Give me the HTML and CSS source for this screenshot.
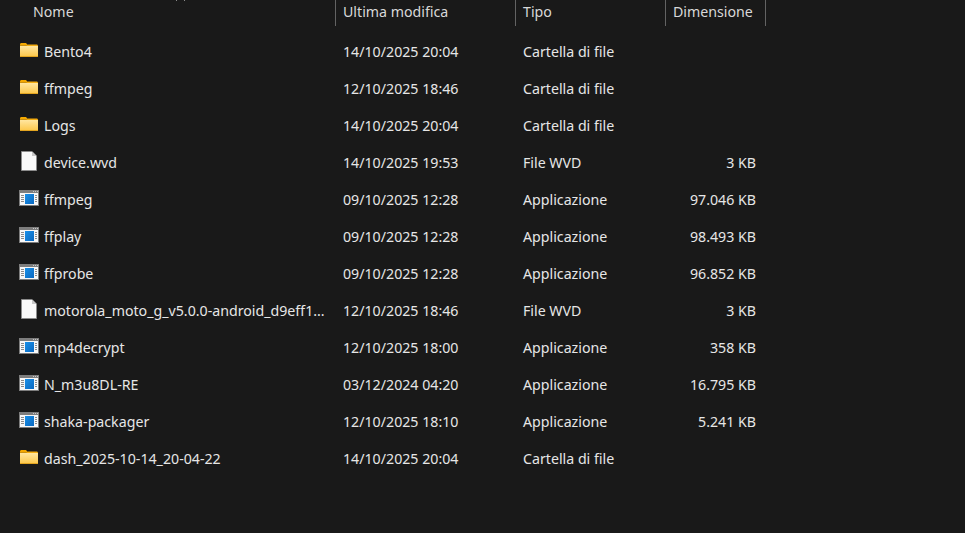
FILE: index.html
```html
<!DOCTYPE html>
<html lang="it">
<head>
<meta charset="utf-8">
<title>Esplora file</title>
<link rel="stylesheet" href="styles.css">
</head>
<body>
<svg class="defs" width="0" height="0" aria-hidden="true">
  <defs>
    <linearGradient id="fg" x1="0" y1="0" x2="0" y2="1"><stop offset="0" stop-color="#ffe6a0"/><stop offset="1" stop-color="#fcc94f"/></linearGradient>
    <linearGradient id="bg" x1="0" y1="0" x2="1" y2="1"><stop offset="0" stop-color="#1a90e8"/><stop offset="1" stop-color="#0a68c0"/></linearGradient>
    <symbol id="folder" viewBox="0 0 18 14">
      <path d="M0 1.5C0 .7.6 0 1.4 0H6l2 2.2h-8z" fill="#f4a800"/>
      <path d="M0 2.2h6.5L8 1.5h8.6c.8 0 1.4.6 1.4 1.4v1H0z" fill="#f4ac10"/>
      <rect x="0" y="3" width="18" height="10" fill="url(#fg)"/>
      <rect x="0" y="13" width="18" height="1" fill="#e2a420"/>
    </symbol>
    <symbol id="file" viewBox="0 0 16 20">
      <path d="M.5.5H11L15.5 5V19.5H.5z" fill="#fafafa" stroke="#8c8c8c"/>
      <path d="M11 .5V5h4.5z" fill="#c8c8c8"/>
    </symbol>
    <symbol id="app" viewBox="0 0 20 16">
      <rect x="0" y="0" width="20" height="16" fill="#7d7d7d"/>
      <rect x="1" y="3" width="18" height="12" fill="#f7f7f7"/>
      <rect x="14" y="1" width="1" height="1" fill="#c8c8c8"/>
      <rect x="16" y="1" width="1" height="1" fill="#c8c8c8"/>
      <rect x="18" y="1" width="1" height="1" fill="#c8c8c8"/>
      <rect x="6" y="4" width="9" height="10" fill="url(#bg)"/>
      <rect x="2" y="5" width="3" height="1" fill="#8a8a8a"/>
      <rect x="2" y="7" width="3" height="1" fill="#8a8a8a"/>
      <rect x="2" y="9" width="3" height="1" fill="#8a8a8a"/>
      <rect x="2" y="11" width="3" height="1" fill="#8a8a8a"/>
      <rect x="16" y="5" width="2" height="1" fill="#8a8a8a"/>
      <rect x="16" y="7" width="2" height="1" fill="#8a8a8a"/>
      <rect x="16" y="9" width="2" height="1" fill="#8a8a8a"/>
      <rect x="16" y="11" width="2" height="1" fill="#8a8a8a"/>
    </symbol>
  </defs>
</svg>
<div class="list">
  <div class="head">
    <div class="hc hname">Nome</div>
    <div class="hc">Ultima modifica</div>
    <div class="hc">Tipo</div>
    <div class="hc">Dimensione</div>
  </div>
  <div class="rows">
    <div class="row"><span class="name"><span class="ic"><svg class="i-folder"><use href="#folder"/></svg></span>Bento4</span><span class="date">14/10/2025 20:04</span><span>Cartella di file</span><span class="size"></span></div>
    <div class="row"><span class="name"><span class="ic"><svg class="i-folder"><use href="#folder"/></svg></span>ffmpeg</span><span class="date">12/10/2025 18:46</span><span>Cartella di file</span><span class="size"></span></div>
    <div class="row"><span class="name"><span class="ic"><svg class="i-folder"><use href="#folder"/></svg></span>Logs</span><span class="date">14/10/2025 20:04</span><span>Cartella di file</span><span class="size"></span></div>
    <div class="row"><span class="name"><span class="ic"><svg class="i-file"><use href="#file"/></svg></span>device.wvd</span><span class="date">14/10/2025 19:53</span><span>File WVD</span><span class="size">3 KB</span></div>
    <div class="row"><span class="name"><span class="ic"><svg class="i-app"><use href="#app"/></svg></span>ffmpeg</span><span class="date">09/10/2025 12:28</span><span>Applicazione</span><span class="size">97.046 KB</span></div>
    <div class="row"><span class="name"><span class="ic"><svg class="i-app"><use href="#app"/></svg></span>ffplay</span><span class="date">09/10/2025 12:28</span><span>Applicazione</span><span class="size">98.493 KB</span></div>
    <div class="row"><span class="name"><span class="ic"><svg class="i-app"><use href="#app"/></svg></span>ffprobe</span><span class="date">09/10/2025 12:28</span><span>Applicazione</span><span class="size">96.852 KB</span></div>
    <div class="row"><span class="name"><span class="ic"><svg class="i-file"><use href="#file"/></svg></span>motorola_moto_g_v5.0.0-android_d9eff1...</span><span class="date">12/10/2025 18:46</span><span>File WVD</span><span class="size">3 KB</span></div>
    <div class="row"><span class="name"><span class="ic"><svg class="i-app"><use href="#app"/></svg></span>mp4decrypt</span><span class="date">12/10/2025 18:00</span><span>Applicazione</span><span class="size">358 KB</span></div>
    <div class="row"><span class="name"><span class="ic"><svg class="i-app"><use href="#app"/></svg></span>N_m3u8DL-RE</span><span class="date">03/12/2024 04:20</span><span>Applicazione</span><span class="size">16.795 KB</span></div>
    <div class="row"><span class="name"><span class="ic"><svg class="i-app"><use href="#app"/></svg></span>shaka-packager</span><span class="date">12/10/2025 18:10</span><span>Applicazione</span><span class="size">5.241 KB</span></div>
    <div class="row"><span class="name"><span class="ic"><svg class="i-folder"><use href="#folder"/></svg></span>dash_2025-10-14_20-04-22</span><span class="date">14/10/2025 20:04</span><span>Cartella di file</span><span class="size"></span></div>
  </div>
</div>
<span class="speck speck-a"></span>
<span class="speck speck-b"></span>
</body>
</html>
```

FILE: styles.css
```css
html, body {
  margin: 0;
  height: 100%;
  background: #191919;
  overflow: hidden;
}
body {
  font-family: "Noto Sans", "Open Sans", "Liberation Sans", sans-serif;
  font-size: 14.2px;
  color: #e6e6e6;
}
.defs { display: block; height: 0; }
.list { width: 766px; }
.head {
  display: grid;
  grid-template-columns: 336px 180px 150px 100px;
  height: 26px;
}
.hc {
  border-right: 1px solid #636363;
  padding: 0 7px;
  line-height: 24px;
  color: #d8d8d8;
  white-space: nowrap;
}
.hname { padding-left: 33px; }
.rows { padding-top: 7px; }
.row {
  display: grid;
  grid-template-columns: 336px 180px 150px 100px;
  height: 37px;
  align-items: center;
}
.row > span { padding: 0 7px; white-space: nowrap; }
.row > .name { display: flex; align-items: center; padding: 0 0 0 20px; }
.ic { width: 24px; display: flex; flex: none; align-items: center; position: relative; top: -1px; }
.i-folder { width: 18px; height: 14px; margin-bottom: 1px; }
.i-file { width: 16px; height: 20px; margin-left: 1px; margin-bottom: 1px; }
.i-app { width: 20px; height: 16px; margin-left: -1px; margin-bottom: 1px; }
.row > .size { text-align: right; padding-right: 10px; }
.speck {
  position: absolute;
  top: 0;
  width: 1px;
  height: 1px;
  background: #8a8a8a;
}
.speck-a { left: 176px; }
.speck-b { left: 184px; }
```
